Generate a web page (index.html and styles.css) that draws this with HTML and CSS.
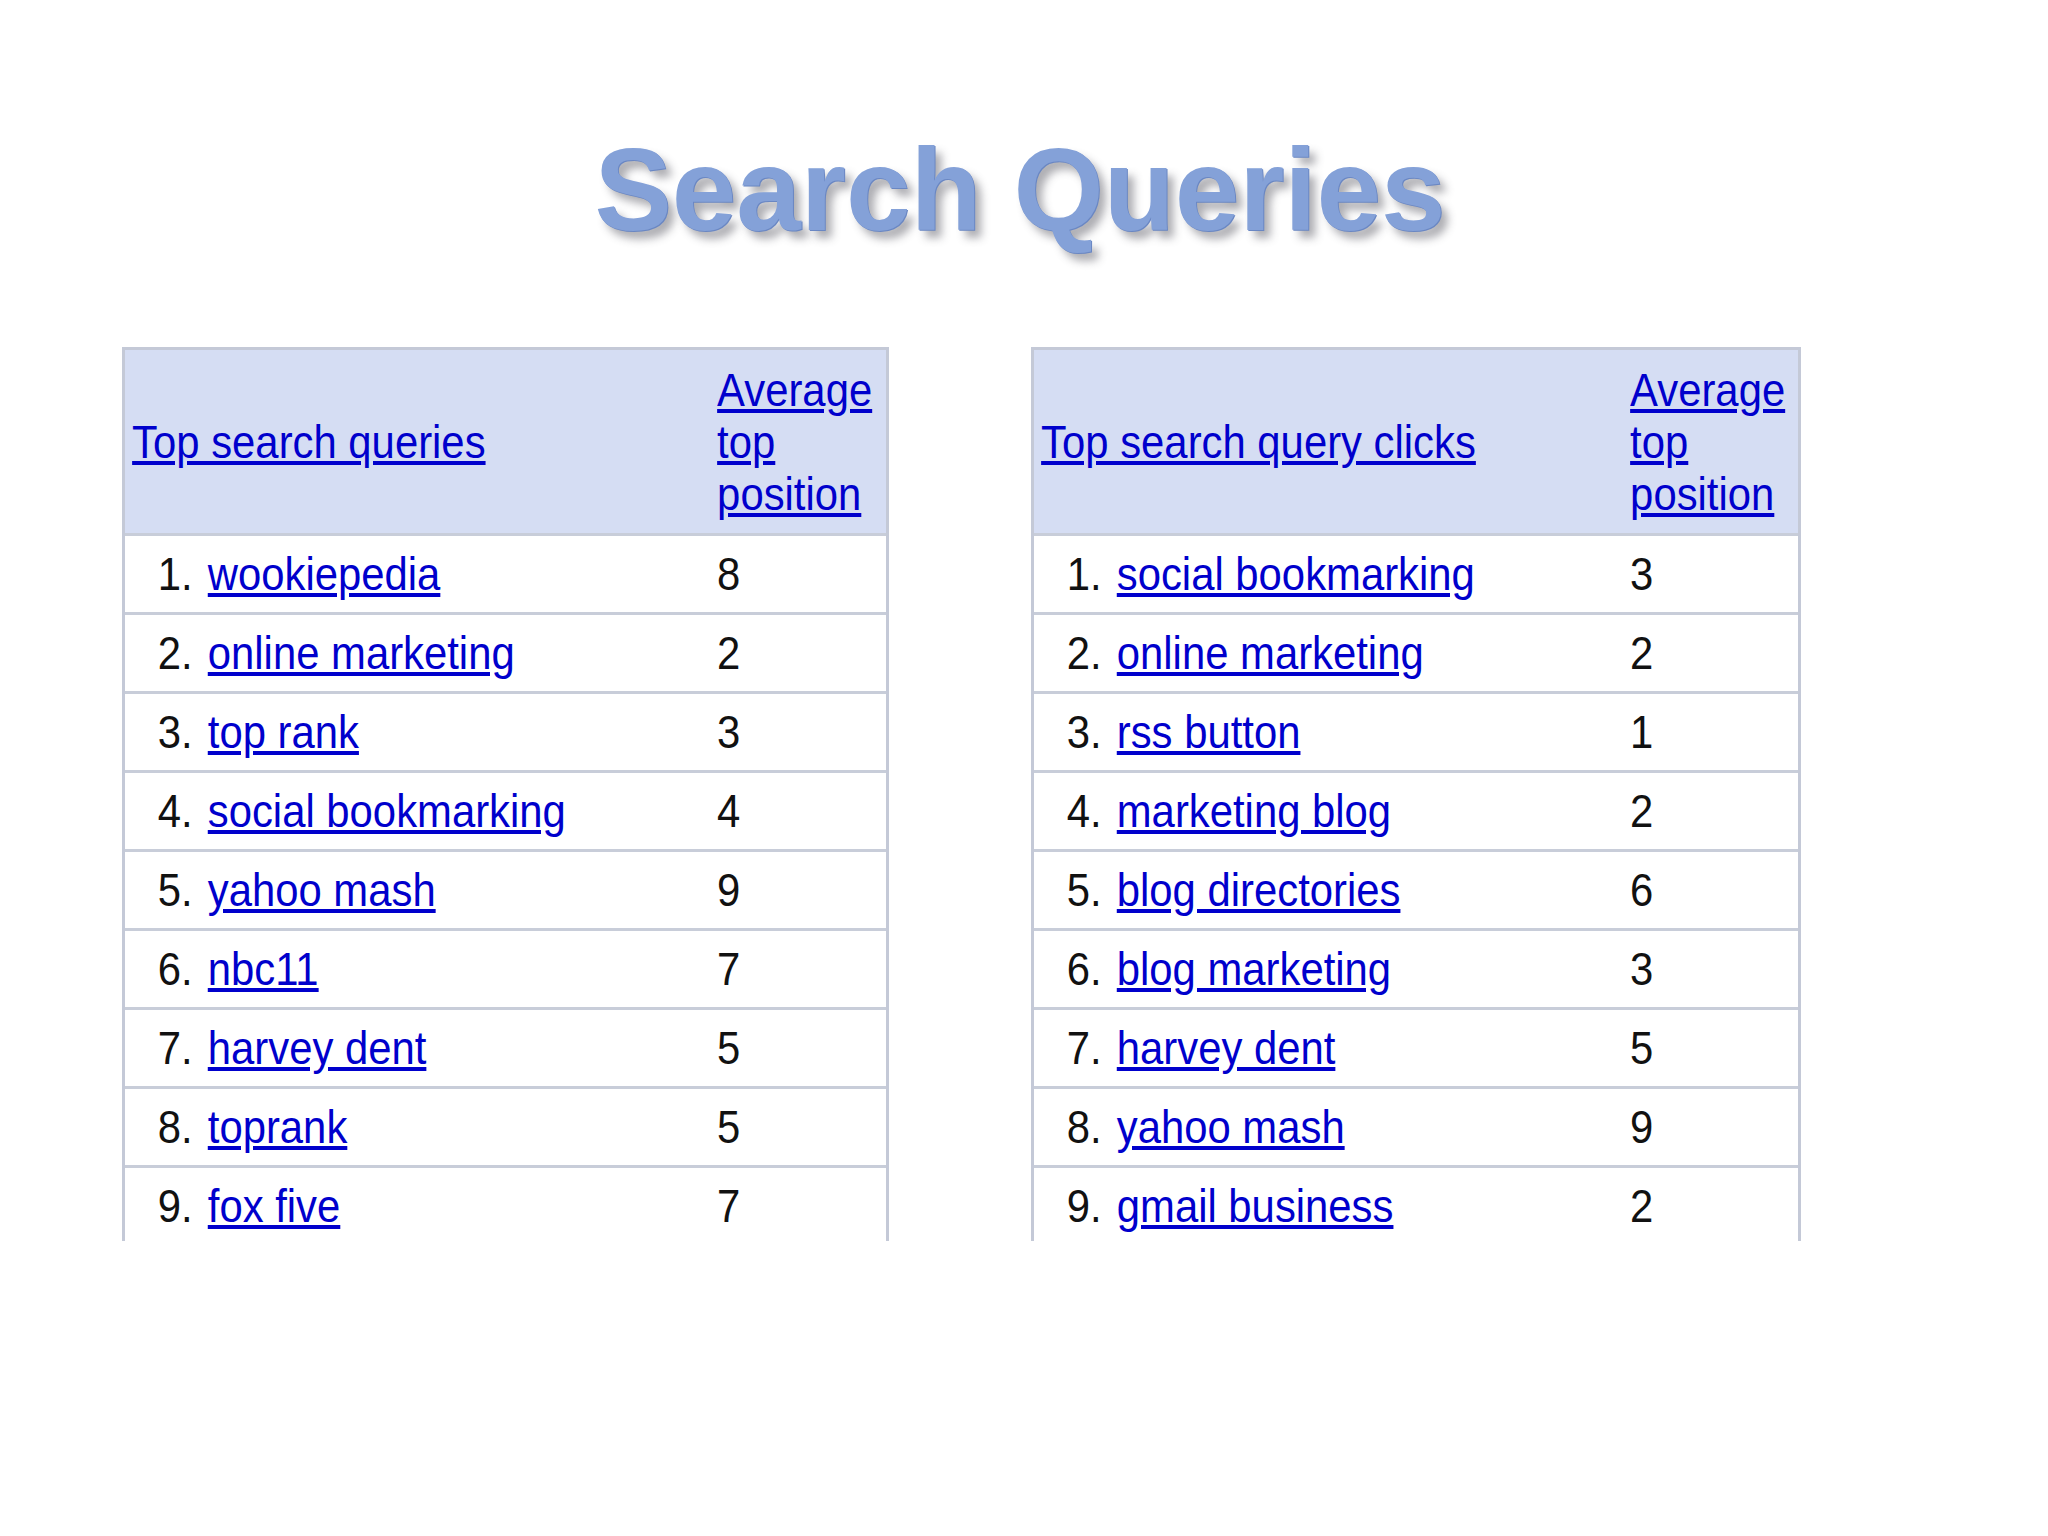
FILE: index.html
```html
<!DOCTYPE html>
<html lang="en">
<head>
<meta charset="utf-8">
<title>Search Queries</title>
<link rel="stylesheet" href="styles.css">
</head>
<body>
<h1 class="title">Search Queries</h1>
<div class="tables">
  <div class="panel left">
    <div class="row head">
      <div class="c1"><a href="#">Top search queries</a></div>
      <div class="c2"><a href="#">Average top position</a></div>
    </div>
    <div class="row"><div class="c1"><span class="num">1.</span><a href="#">wookiepedia</a></div><div class="c2">8</div></div>
    <div class="row"><div class="c1"><span class="num">2.</span><a href="#">online marketing</a></div><div class="c2">2</div></div>
    <div class="row"><div class="c1"><span class="num">3.</span><a href="#">top rank</a></div><div class="c2">3</div></div>
    <div class="row"><div class="c1"><span class="num">4.</span><a href="#">social bookmarking</a></div><div class="c2">4</div></div>
    <div class="row"><div class="c1"><span class="num">5.</span><a href="#">yahoo mash</a></div><div class="c2">9</div></div>
    <div class="row"><div class="c1"><span class="num">6.</span><a href="#">nbc11</a></div><div class="c2">7</div></div>
    <div class="row"><div class="c1"><span class="num">7.</span><a href="#">harvey dent</a></div><div class="c2">5</div></div>
    <div class="row"><div class="c1"><span class="num">8.</span><a href="#">toprank</a></div><div class="c2">5</div></div>
    <div class="row"><div class="c1"><span class="num">9.</span><a href="#">fox five</a></div><div class="c2">7</div></div>
  </div>
  <div class="panel right">
    <div class="row head">
      <div class="c1"><a href="#">Top search query clicks</a></div>
      <div class="c2"><a href="#">Average top position</a></div>
    </div>
    <div class="row"><div class="c1"><span class="num">1.</span><a href="#">social bookmarking</a></div><div class="c2">3</div></div>
    <div class="row"><div class="c1"><span class="num">2.</span><a href="#">online marketing</a></div><div class="c2">2</div></div>
    <div class="row"><div class="c1"><span class="num">3.</span><a href="#">rss button</a></div><div class="c2">1</div></div>
    <div class="row"><div class="c1"><span class="num">4.</span><a href="#">marketing blog</a></div><div class="c2">2</div></div>
    <div class="row"><div class="c1"><span class="num">5.</span><a href="#">blog directories</a></div><div class="c2">6</div></div>
    <div class="row"><div class="c1"><span class="num">6.</span><a href="#">blog marketing</a></div><div class="c2">3</div></div>
    <div class="row"><div class="c1"><span class="num">7.</span><a href="#">harvey dent</a></div><div class="c2">5</div></div>
    <div class="row"><div class="c1"><span class="num">8.</span><a href="#">yahoo mash</a></div><div class="c2">9</div></div>
    <div class="row"><div class="c1"><span class="num">9.</span><a href="#">gmail business</a></div><div class="c2">2</div></div>
  </div>
</div>
</body>
</html>
```
FILE: styles.css
```css
html, body {
  margin: 0;
  padding: 0;
  background: #ffffff;
}

body {
  font-family: "Liberation Sans", Arial, sans-serif;
}

.title {
  margin: 0;
  padding: 132px 8px 0 0;
  height: 116px;
  font-size: 116px;
  line-height: 116px;
  font-weight: bold;
  text-align: center;
  color: #84a1d8;
  text-shadow: 1px 1px 0 #6a87c3, 7px 8px 8px rgba(60, 60, 72, 0.42);
}

.tables {
  display: flex;
  gap: 142px;
  padding-left: 122px;
  margin-top: 99px;
  font-size: 47px;
  line-height: 52px;
  color: #111111;
}

.panel {
  box-sizing: border-box;
  flex-shrink: 0;
  height: 894px;
  overflow: hidden;
  border: 3px solid #c4c9d7;
  border-bottom: 0;
}

.left { width: 767px; }
.right { width: 770px; }

.row {
  display: flex;
  align-items: center;
  box-sizing: border-box;
  height: 79px;
  border-bottom: 3px solid #c8cdd9;
  background: #ffffff;
}

.row.head {
  height: 186px;
  background: #d5ddf3;
}

/* the captured table is slightly condensed horizontally */
.c1,
.c2 {
  box-sizing: border-box;
  transform: scaleX(0.89);
  transform-origin: left center;
}

.c1 {
  flex-shrink: 0;
  padding-left: 8px;
  white-space: nowrap;
}

.left .c1 { width: 585px; }
.right .c1 { width: 589px; }

.c2 {
  flex: 1 1 0;
  min-width: 0;
  padding-left: 8px;
  padding-right: 4px;
}

.num {
  display: inline-block;
  width: 68px;
  margin-right: 17px;
  text-align: right;
}

a {
  color: #0000cc;
  text-decoration: underline;
}
```
